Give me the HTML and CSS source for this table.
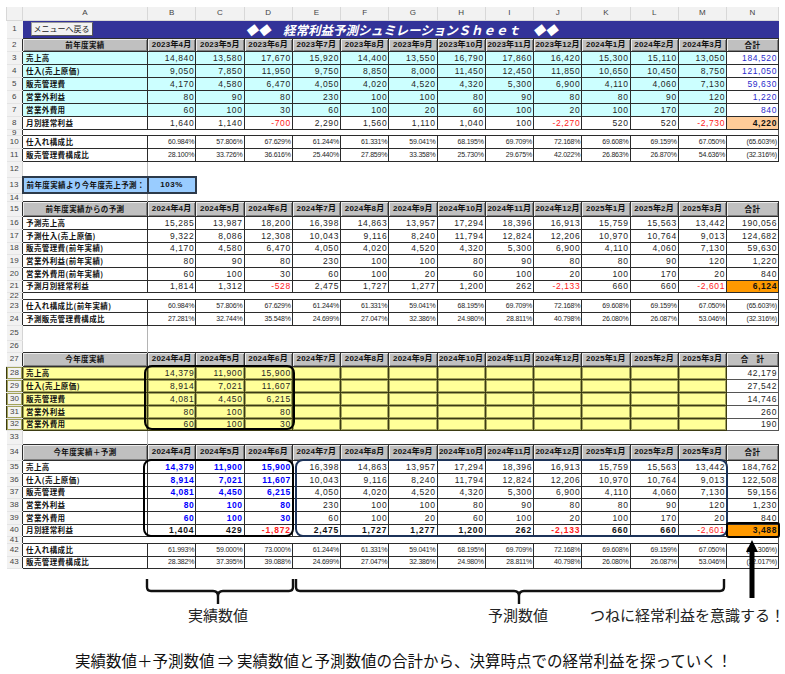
FILE: index.html
```html
<!DOCTYPE html>
<html lang="ja">
<head>
<meta charset="utf-8">
<title>経常利益予測シュミレーションSheet</title>
<link rel="stylesheet" href="styles.css">
</head>
<body>
<div class="page">
<table class="sheet">
<colgroup><col class="cn"><col class="ca"><col class="cm"><col class="cm"><col class="cm"><col class="cm"><col class="cm"><col class="cm"><col class="cm"><col class="cm"><col class="cm"><col class="cm"><col class="cm"><col class="cm"><col class="ct"></colgroup>
<tr class="colhead"><td class="corner"></td><td>A</td><td>B</td><td>C</td><td>D</td><td>E</td><td>F</td><td>G</td><td>H</td><td>I</td><td>J</td><td>K</td><td>L</td><td>M</td><td>N</td></tr>
<tr class="h18"><td class="rn">1</td><td class="ttlA"><span class="btn">メニューへ戻る</span></td><td class="ttl" colspan="13">◆◆　経常利益予測シュミレーションＳｈｅｅｔ　◆◆</td></tr>
<tr class="hr"><td class="rn">2</td><td class="hd hl">前年度実績</td><td class="hd">2023年4月</td><td class="hd">2023年5月</td><td class="hd">2023年6月</td><td class="hd">2023年7月</td><td class="hd">2023年8月</td><td class="hd">2023年9月</td><td class="hd">2023年10月</td><td class="hd">2023年11月</td><td class="hd">2023年12月</td><td class="hd">2024年1月</td><td class="hd">2024年2月</td><td class="hd">2024年3月</td><td class="hd hl">合計</td></tr>
<tr class="d cy"><td class="rn">3</td><td class="lb">売上高</td><td>14,840</td><td>13,580</td><td>17,670</td><td>15,920</td><td>14,400</td><td>13,550</td><td>16,790</td><td>17,860</td><td>16,420</td><td>15,300</td><td>15,110</td><td>13,050</td><td class="t tb">184,520</td></tr>
<tr class="d cy"><td class="rn">4</td><td class="lb">仕入(売上原価)</td><td>9,050</td><td>7,850</td><td>11,950</td><td>9,750</td><td>8,850</td><td>8,000</td><td>11,450</td><td>12,450</td><td>11,850</td><td>10,650</td><td>10,450</td><td>8,750</td><td class="t tb">121,050</td></tr>
<tr class="d cy"><td class="rn">5</td><td class="lb">販売管理費</td><td>4,170</td><td>4,580</td><td>6,470</td><td>4,050</td><td>4,020</td><td>4,520</td><td>4,320</td><td>5,300</td><td>6,900</td><td>4,110</td><td>4,060</td><td>7,130</td><td class="t tb">59,630</td></tr>
<tr class="d cy"><td class="rn">6</td><td class="lb">営業外利益</td><td>80</td><td>90</td><td>80</td><td>230</td><td>100</td><td>100</td><td>80</td><td>90</td><td>80</td><td>80</td><td>90</td><td>120</td><td class="t tb">1,220</td></tr>
<tr class="d cy"><td class="rn">7</td><td class="lb">営業外費用</td><td>60</td><td>100</td><td>30</td><td>60</td><td>100</td><td>20</td><td>60</td><td>100</td><td>20</td><td>100</td><td>170</td><td>20</td><td class="t tb">840</td></tr>
<tr class="d"><td class="rn">8</td><td class="lb">月別経常利益</td><td>1,640</td><td>1,140</td><td class="rd">-700</td><td>2,290</td><td>1,560</td><td>1,110</td><td>1,040</td><td>100</td><td class="rd">-2,270</td><td>520</td><td>520</td><td class="rd">-2,730</td><td class="pe">4,220</td></tr>
<tr class="h5"><td class="rn">9</td><td class="gp" colspan="14"></td></tr>
<tr class="d pc"><td class="rn">10</td><td class="lb">仕入れ構成比</td><td>60.984%</td><td>57.806%</td><td>67.629%</td><td>61.244%</td><td>61.331%</td><td>59.041%</td><td>68.195%</td><td>69.709%</td><td>72.168%</td><td>69.608%</td><td>69.159%</td><td>67.050%</td><td>(65.603%)</td></tr>
<tr class="d pc"><td class="rn">11</td><td class="lb">販売管理費構成比</td><td>28.100%</td><td>33.726%</td><td>36.616%</td><td>25.440%</td><td>27.859%</td><td>33.358%</td><td>25.730%</td><td>29.675%</td><td>42.022%</td><td>26.863%</td><td>26.870%</td><td>54.636%</td><td>(32.316%)</td></tr>
<tr class="h16 bk"><td class="rn">12</td><td class="ba"></td><td colspan="13"></td></tr>
<tr class="h16"><td class="rn">13</td><td class="lb q">前年度実績より今年度売上予測：</td><td class="q qc">103%</td><td colspan="12"></td></tr>
<tr class="h8 bk"><td class="rn">14</td><td class="ba"></td><td colspan="13"></td></tr>
<tr class="h15"><td class="rn">15</td><td class="hd hl">前年度実績からの予測</td><td class="hd">2024年4月</td><td class="hd">2024年5月</td><td class="hd">2024年6月</td><td class="hd">2024年7月</td><td class="hd">2024年8月</td><td class="hd">2024年9月</td><td class="hd">2024年10月</td><td class="hd">2024年11月</td><td class="hd">2024年12月</td><td class="hd">2025年1月</td><td class="hd">2025年2月</td><td class="hd">2025年3月</td><td class="hd hl">合計</td></tr>
<tr class="d"><td class="rn">16</td><td class="lb">予測売上高</td><td>15,285</td><td>13,987</td><td>18,200</td><td>16,398</td><td>14,863</td><td>13,957</td><td>17,294</td><td>18,396</td><td>16,913</td><td>15,759</td><td>15,563</td><td>13,442</td><td>190,056</td></tr>
<tr class="d"><td class="rn">17</td><td class="lb">予測仕入(売上原価)</td><td>9,322</td><td>8,086</td><td>12,308</td><td>10,043</td><td>9,116</td><td>8,240</td><td>11,794</td><td>12,824</td><td>12,206</td><td>10,970</td><td>10,764</td><td>9,013</td><td>124,682</td></tr>
<tr class="d h12"><td class="rn">18</td><td class="lb">販売管理費(前年実績)</td><td>4,170</td><td>4,580</td><td>6,470</td><td>4,050</td><td>4,020</td><td>4,520</td><td>4,320</td><td>5,300</td><td>6,900</td><td>4,110</td><td>4,060</td><td>7,130</td><td>59,630</td></tr>
<tr class="d"><td class="rn">19</td><td class="lb">営業外利益(前年実績)</td><td>80</td><td>90</td><td>80</td><td>230</td><td>100</td><td>100</td><td>80</td><td>90</td><td>80</td><td>80</td><td>90</td><td>120</td><td>1,220</td></tr>
<tr class="d"><td class="rn">20</td><td class="lb">営業外費用(前年実績)</td><td>60</td><td>100</td><td>30</td><td>60</td><td>100</td><td>20</td><td>60</td><td>100</td><td>20</td><td>100</td><td>170</td><td>20</td><td>840</td></tr>
<tr class="d h12"><td class="rn">21</td><td class="lb">予測月別経常利益</td><td>1,814</td><td>1,312</td><td class="rd">-528</td><td>2,475</td><td>1,727</td><td>1,277</td><td>1,200</td><td>262</td><td class="rd">-2,133</td><td>660</td><td>660</td><td class="rd">-2,601</td><td class="or">6,124</td></tr>
<tr class="h7"><td class="rn">22</td><td class="gp" colspan="14"></td></tr>
<tr class="d pc"><td class="rn">23</td><td class="lb">仕入れ構成比(前年実績)</td><td>60.984%</td><td>57.806%</td><td>67.629%</td><td>61.244%</td><td>61.331%</td><td>59.041%</td><td>68.195%</td><td>69.709%</td><td>72.168%</td><td>69.608%</td><td>69.159%</td><td>67.050%</td><td>(65.603%)</td></tr>
<tr class="d pc"><td class="rn">24</td><td class="lb">予測販売管理費構成比</td><td>27.281%</td><td>32.744%</td><td>35.548%</td><td>24.699%</td><td>27.047%</td><td>32.386%</td><td>24.980%</td><td>28.811%</td><td>40.798%</td><td>26.080%</td><td>26.087%</td><td>53.046%</td><td>(32.316%)</td></tr>
<tr class="h15 bk"><td class="rn">25</td><td class="ba"></td><td colspan="13"></td></tr>
<tr class="h12 bk"><td class="rn">26</td><td class="ba"></td><td colspan="13"></td></tr>
<tr class="h14"><td class="rn">27</td><td class="hd hl">今年度実績</td><td class="hd">2024年4月</td><td class="hd">2024年5月</td><td class="hd">2024年6月</td><td class="hd">2024年7月</td><td class="hd">2024年8月</td><td class="hd">2024年9月</td><td class="hd">2024年10月</td><td class="hd">2024年11月</td><td class="hd">2024年12月</td><td class="hd">2025年1月</td><td class="hd">2025年2月</td><td class="hd">2025年3月</td><td class="hd hl">合　計</td></tr>
<tr class="yl"><td class="rn">28</td><td class="lb">売上高</td><td>14,379</td><td>11,900</td><td>15,900</td><td></td><td></td><td></td><td></td><td></td><td></td><td></td><td></td><td></td><td class="t">42,179</td></tr>
<tr class="yl"><td class="rn">29</td><td class="lb">仕入(売上原価)</td><td>8,914</td><td>7,021</td><td>11,607</td><td></td><td></td><td></td><td></td><td></td><td></td><td></td><td></td><td></td><td class="t">27,542</td></tr>
<tr class="yl"><td class="rn">30</td><td class="lb">販売管理費</td><td>4,081</td><td>4,450</td><td>6,215</td><td></td><td></td><td></td><td></td><td></td><td></td><td></td><td></td><td></td><td class="t">14,746</td></tr>
<tr class="yl"><td class="rn">31</td><td class="lb">営業外利益</td><td>80</td><td>100</td><td>80</td><td></td><td></td><td></td><td></td><td></td><td></td><td></td><td></td><td></td><td class="t">260</td></tr>
<tr class="yl h12"><td class="rn">32</td><td class="lb">営業外費用</td><td>60</td><td>100</td><td>30</td><td></td><td></td><td></td><td></td><td></td><td></td><td></td><td></td><td></td><td class="t">190</td></tr>
<tr class="h14 bk"><td class="rn">33</td><td class="ba"></td><td colspan="13"></td></tr>
<tr class="h16"><td class="rn">34</td><td class="hd hl">今年度実績＋予測</td><td class="hd">2024年4月</td><td class="hd">2024年5月</td><td class="hd">2024年6月</td><td class="hd">2024年7月</td><td class="hd">2024年8月</td><td class="hd">2024年9月</td><td class="hd">2024年10月</td><td class="hd">2024年11月</td><td class="hd">2024年12月</td><td class="hd">2025年1月</td><td class="hd">2025年2月</td><td class="hd">2025年3月</td><td class="hd hl">合計</td></tr>
<tr class="d"><td class="rn">35</td><td class="lb">売上高</td><td class="bb">14,379</td><td class="bb">11,900</td><td class="bb">15,900</td><td>16,398</td><td>14,863</td><td>13,957</td><td>17,294</td><td>18,396</td><td>16,913</td><td>15,759</td><td>15,563</td><td>13,442</td><td>184,762</td></tr>
<tr class="d"><td class="rn">36</td><td class="lb">仕入(売上原価)</td><td class="bb">8,914</td><td class="bb">7,021</td><td class="bb">11,607</td><td>10,043</td><td>9,116</td><td>8,240</td><td>11,794</td><td>12,824</td><td>12,206</td><td>10,970</td><td>10,764</td><td>9,013</td><td>122,508</td></tr>
<tr class="d h12"><td class="rn">37</td><td class="lb">販売管理費</td><td class="bb">4,081</td><td class="bb">4,450</td><td class="bb">6,215</td><td>4,050</td><td>4,020</td><td>4,520</td><td>4,320</td><td>5,300</td><td>6,900</td><td>4,110</td><td>4,060</td><td>7,130</td><td>59,156</td></tr>
<tr class="d"><td class="rn">38</td><td class="lb">営業外利益</td><td class="bb">80</td><td class="bb">100</td><td class="bb">80</td><td>230</td><td>100</td><td>100</td><td>80</td><td>90</td><td>80</td><td>80</td><td>90</td><td>120</td><td>1,230</td></tr>
<tr class="d"><td class="rn">39</td><td class="lb">営業外費用</td><td class="bb">60</td><td class="bb">100</td><td class="bb">30</td><td>60</td><td>100</td><td>20</td><td>60</td><td>100</td><td>20</td><td>100</td><td>170</td><td>20</td><td>840</td></tr>
<tr class="d h12"><td class="rn">40</td><td class="lb">月別経常利益</td><td class="b">1,404</td><td class="b">429</td><td class="b rd">-1,872</td><td class="b">2,475</td><td class="b">1,727</td><td class="b">1,277</td><td class="b">1,200</td><td class="b">262</td><td class="b rd">-2,133</td><td class="b">660</td><td class="b">660</td><td class="rd">-2,601</td><td class="or">3,488</td></tr>
<tr class="h7"><td class="rn">41</td><td class="gp" colspan="14"></td></tr>
<tr class="d pc"><td class="rn">42</td><td class="lb">仕入れ構成比</td><td>61.993%</td><td>59.000%</td><td>73.000%</td><td>61.244%</td><td>61.331%</td><td>59.041%</td><td>68.195%</td><td>69.709%</td><td>72.168%</td><td>69.608%</td><td>69.159%</td><td>67.050%</td><td>(66.306%)</td></tr>
<tr class="d pc h12"><td class="rn">43</td><td class="lb">販売管理費構成比</td><td>28.382%</td><td>37.395%</td><td>39.088%</td><td>24.699%</td><td>27.047%</td><td>32.386%</td><td>24.980%</td><td>28.811%</td><td>40.798%</td><td>26.080%</td><td>26.087%</td><td>53.046%</td><td>(32.017%)</td></tr>
</table>

<svg class="braces" width="785" height="37" viewBox="0 0 785 37">
<path d="M147 10 V18 Q147 22 151 22 H213 Q218 22 218 27 V35 M218 27 Q218 22 223 22 H289 Q293 22 293 18 V10" />
<path d="M296 10 V18 Q296 22 300 22 H514 Q519 22 519 27 V35 M519 27 Q519 22 524 22 H720 Q724 22 724 18 V10" />
</svg>
<div class="labels">
<span class="lab">実績数値</span>
<span class="lab lab2">予測数値</span>
<span class="lab3">つねに経常利益を意識する！</span>
</div>
<p class="summary">実績数値＋予測数値 ⇒ 実績数値と予測数値の合計から、決算時点での経常利益を探っていく！</p>

<div class="ring ring1"></div>
<div class="ring ring2"></div>
<div class="ring ring3"></div>
<div class="ring ring4"></div>
<svg class="arrow" width="16" height="62" viewBox="0 0 16 62"><path d="M8 2 L14 14 L10.5 14 L10.5 60 L5.5 60 L5.5 14 L2 14 Z"/></svg>
</div>
</body>
</html>
```

FILE: styles.css
```css
* { box-sizing: border-box; }
html, body { margin: 0; background: #fff; }
body { font-family: "Liberation Sans", "Noto Sans CJK JP", sans-serif; color: #111; }

.page { position: relative; width: 785px; height: 674px; padding: 7px 0 0 6px; overflow: hidden; }

.sheet { border-collapse: collapse; table-layout: fixed; width: 772px; }
.sheet col.cn { width: 16px; }
.sheet col.ca { width: 125px; }
.sheet col.cm { width: 48.25px; }
.sheet col.ct { width: 52px; }

.sheet tr { height: 13px; }
.sheet tr.h5 { height: 5px; }
.sheet tr.h7 { height: 7px; }
.sheet tr.h8 { height: 8px; }
.sheet tr.h12 { height: 12px; }
.sheet tr.h14 { height: 14px; }
.sheet tr.h15 { height: 15px; }
.sheet tr.h16 { height: 16px; }
.sheet tr.h18 { height: 18px; }

.sheet td { padding: 0 1px 0 1px; white-space: nowrap; overflow: hidden; text-align: right; font-size: 8.5px; line-height: 10px; letter-spacing: 0.6px; color: #262626; }
.sheet tr.h5 td, .sheet tr.h7 td, .sheet tr.h8 td { line-height: 5px; }

.colhead td { background: #f2f2f2; border: 1px solid #d8d8d8; border-top: none; }
.sheet .colhead td { text-align: center; font-size: 8px; color: #444; letter-spacing: 0; }
.sheet .colhead td.corner { background: #f2f2f2; }

.sheet td.rn { background: #f2f2f2; text-align: center; font-size: 8px; color: #444; letter-spacing: 0; padding: 0; border-bottom: 1px solid #e4e4e4; }

.sheet td.ttlA { background: #333399; padding: 0 0 0 8px; text-align: left; }
.btn { display: inline-block; width: 62px; height: 14px; background: #f2f2f2; border: 1px solid #9a9a9a; border-right-color: #555; border-bottom-color: #555; font-family: "Noto Sans CJK JP", sans-serif; font-size: 8px; line-height: 12px; text-align: center; color: #222; letter-spacing: 0; vertical-align: middle; }
.sheet td.ttl { background: #333399; color: #fff; text-align: left; padding: 1px 0 0 98px; font-family: "Noto Sans CJK JP", sans-serif; font-weight: 700; font-style: italic; font-size: 12.5px; letter-spacing: 0; line-height: 16px; }

.sheet td.hd { background: #c0c0c0; border: 1px solid #2e2e2e; box-shadow: inset 1px 1px 0 #ececec, inset -1px -1px 0 #808080; text-align: center; font-weight: 700; font-size: 8px; letter-spacing: 0.2px; padding: 0; color: #111; }
.sheet td.hl { font-family: "Noto Sans CJK JP", sans-serif; font-size: 7.5px; letter-spacing: 0.4px; }

tr.d td { border: 1px solid #2b2b2b; background: #fff; }
tr.cy td { background: #ccffff; }
.sheet tr.cy td.t { background: #fff; }
.sheet tr.d td.rn { border: none; border-bottom: 1px solid #e4e4e4; background: #f2f2f2; }

.sheet td.lb { text-align: left; font-family: "Noto Sans CJK JP", sans-serif; font-weight: 700; font-size: 7.5px; letter-spacing: 0.4px; padding-left: 3px; color: #111; }

tr.pc td { font-size: 7px; letter-spacing: -0.2px; }

.sheet td.tb { color: #2b2bcc; }
.sheet td.b { font-weight: 700; letter-spacing: 0.8px; color: #111; }
.sheet td.bb { color: #0000ff; font-weight: 700; letter-spacing: 0.5px; }
.sheet td.pe { background: #ffcc99; font-weight: 700; letter-spacing: 0.6px; color: #111; }
.sheet td.or { background: #ff9900; font-weight: 700; letter-spacing: 0.6px; color: #111; }
.sheet td.rd { color: #ff1a1a; }

tr.yl td { background: #ffff99; border: 1px solid #3b3b12; box-shadow: inset 0 0 0 1px #a3a35c; }
.sheet tr.yl td.t { background: #fff; border-color: #555; box-shadow: none; }

.sheet td.q { background: #99ccff; border: 2px solid #2d3a4a; }
.sheet td.qc { text-align: center; font-weight: 700; font-size: 8px; color: #111; }

.sheet tr.bk td.ba { border-left: 1px solid #d4d4d4; border-right: 1px solid #b4b4b4; }
.sheet td.gp { border-left: 1px solid #333; border-right: 1px solid #555; }

.braces { display: block; margin-left: -6px; }
.braces path { fill: none; stroke: #111; stroke-width: 2.4; }

.labels { display: flex; height: 18px; padding-left: 152px; font-family: "Noto Sans CJK JP", sans-serif; font-size: 15px; line-height: 18px; color: #222; }
.lab { width: 120px; text-align: center; }
.lab2 { margin-left: 180px; }
.lab3 { margin-left: 12px; white-space: nowrap; }

.summary { margin: 27px 0 0 69px; font-family: "Noto Sans CJK JP", sans-serif; font-size: 15.5px; line-height: 18px; color: #111; white-space: nowrap; }

.ring { position: absolute; border: 2px solid #000; border-radius: 8px; }
.ring1 { left: 144px; top: 365px; width: 151px; height: 65px; }
.ring2 { left: 143px; top: 459px; width: 151px; height: 78px; }
.ring3 { left: 295px; top: 459px; width: 433px; height: 78px; border-color: #1c3359; }
.ring4 { left: 726px; top: 522px; width: 54px; height: 16px; border-width: 2.5px; border-radius: 3px; }

.arrow { position: absolute; left: 744px; top: 538px; }
.arrow path { fill: #000; }
```
